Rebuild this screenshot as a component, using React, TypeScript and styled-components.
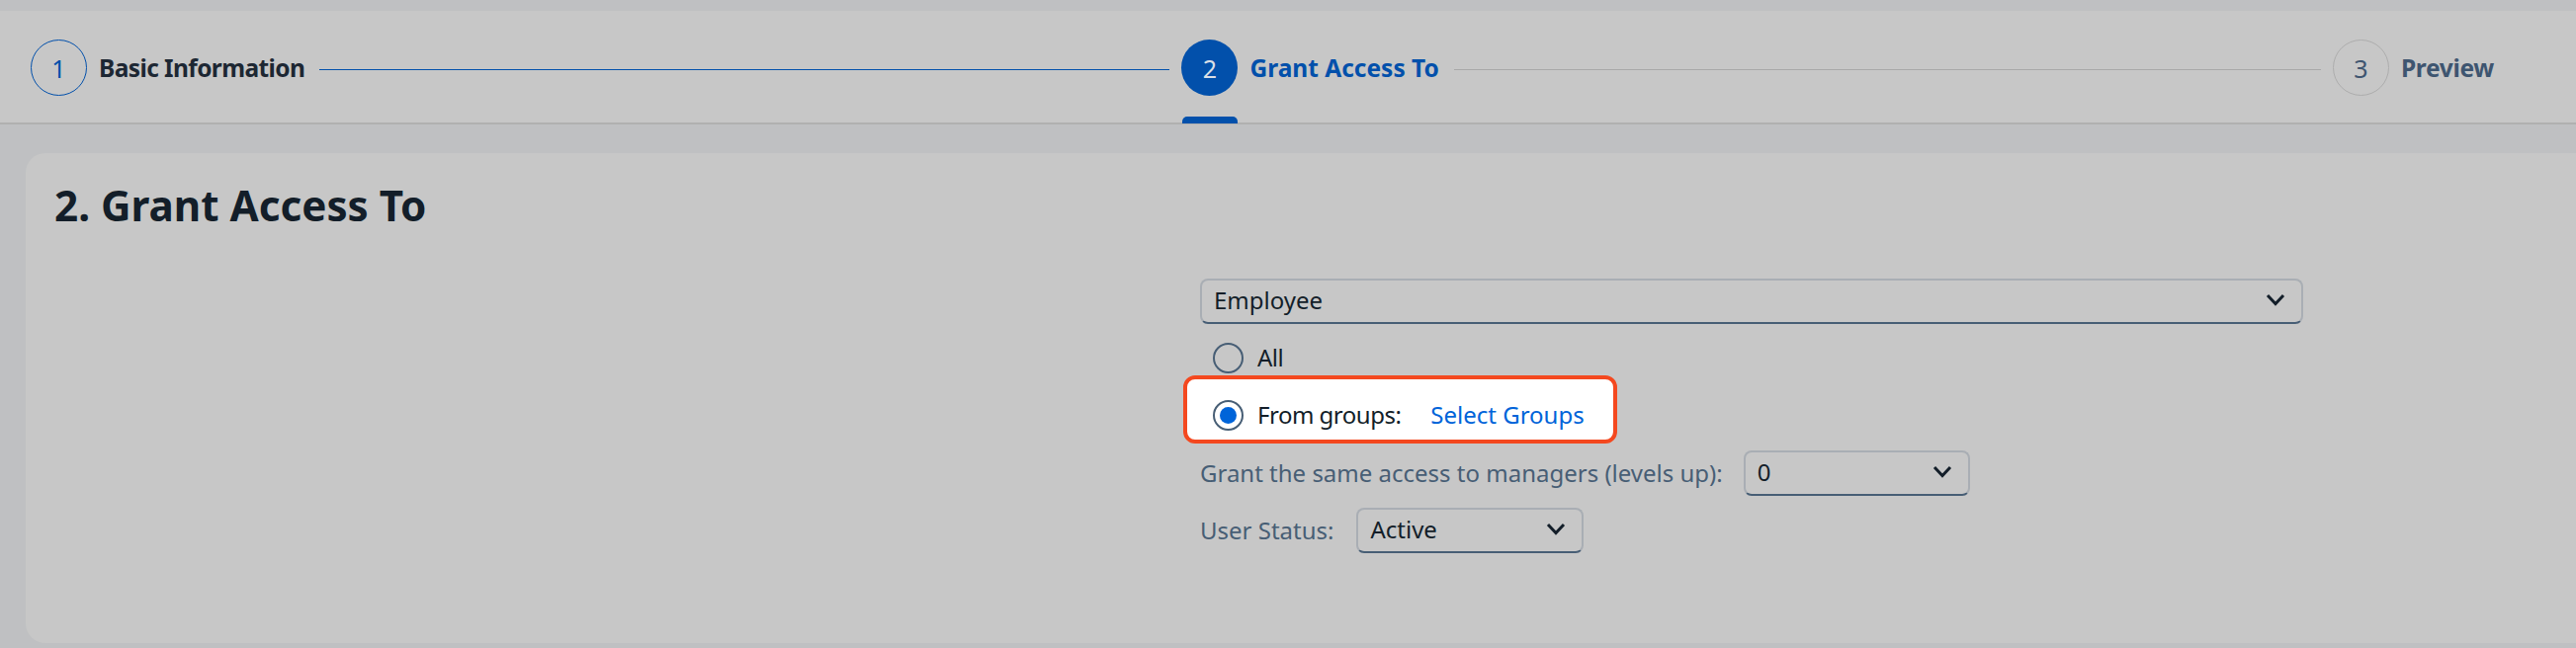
import styled, { createGlobalStyle } from 'styled-components';

const GlobalStyle = createGlobalStyle`
  html, body {
    margin: 0;
    padding: 0;
    background: #bfc0c2;
  }
  * {
    box-sizing: border-box;
  }
`;

const Page = styled.div`
  width: 2606px;
  height: 656px;
  padding-top: 11px;
  overflow: hidden;
  font-family: 'Noto Sans', 'Liberation Sans', sans-serif;
  color: #131e29;
`;

const Stepper = styled.header`
  display: flex;
  align-items: flex-start;
  height: 115px;
  padding: 29px 83px 0 31px;
  background: #c7c7c7;
  border-bottom: 2px solid #b0b0b0;
`;

const Step = styled.div<{ $last?: boolean }>`
  display: flex;
  align-items: center;
  flex: ${(p) => (p.$last ? 'none' : '1')};
`;

const Circle = styled.div<{ $state: 'done' | 'active' | 'todo' }>`
  position: relative;
  flex: none;
  display: flex;
  align-items: center;
  justify-content: center;
  width: 57px;
  height: 57px;
  border-radius: 50%;
  font-size: 25px;
  background: ${(p) => (p.$state === 'active' ? '#0250ab' : 'transparent')};
  color: ${(p) => (p.$state === 'active' ? '#d9dfe6' : p.$state === 'done' ? '#0250ab' : '#3e5570')};
  border: ${(p) =>
    p.$state === 'active' ? 'none' : p.$state === 'done' ? '1px solid #0250ab' : '1px solid #adadad'};
  ${(p) =>
    p.$state === 'active' &&
    `&::after {
      content: '';
      position: absolute;
      left: 1px;
      top: 78px;
      width: 56px;
      height: 7px;
      border-radius: 5px 5px 0 0;
      background: #0250ab;
    }`}
`;

const StepLabel = styled.span<{ $state: 'done' | 'active' | 'todo' }>`
  flex: none;
  margin-left: 12px;
  font-size: 24.5px;
  font-weight: 700;
  letter-spacing: ${(p) => (p.$state === 'done' ? '-0.6px' : p.$state === 'todo' ? '-0.3px' : '0')};
  color: ${(p) => (p.$state === 'active' ? '#0250ab' : p.$state === 'done' ? '#1d2733' : '#3e5570')};
`;

const Line = styled.div<{ $done?: boolean }>`
  flex: 1;
  height: 1px;
  margin: 3px 12px 0 15px;
  background: ${(p) => (p.$done ? '#0250ab' : '#a8a8a8')};
`;

const Content = styled.main`
  padding: 29px 0 5px 26px;
`;

const Card = styled.section`
  height: 496px;
  padding: 24px 0 0 29px;
  border-radius: 20px 0 0 20px;
  background: #c7c7c7;
`;

const Title = styled.h2`
  margin: 0;
  font-size: 42.2px;
  line-height: 58px;
  font-weight: 700;
  color: #131e29;
`;

const Form = styled.div`
  display: flex;
  flex-direction: column;
  align-items: flex-start;
  width: 1116px;
  margin: 45px 0 0 1159px;
`;

const Select = styled.div<{ $width: string }>`
  display: flex;
  align-items: center;
  justify-content: space-between;
  flex: none;
  width: ${(p) => p.$width};
  height: 46px;
  padding: 0 16px 3px 12px;
  border: 2px solid #a9aeb4;
  border-bottom-color: #475e75;
  border-radius: 8px;
  font-size: 24px;
  color: #131e29;
`;

const Chevron = () => (
  <svg width="20" height="13" viewBox="0 0 20 13" fill="none">
    <path d="M2 2 L10 10.5 L18 2" stroke="#131e29" strokeWidth="3" />
  </svg>
);

const RadioRow = styled.div`
  display: flex;
  align-items: center;
  height: 31px;
  margin: 19px 0 0 13px;
`;

const Radio = styled.span<{ $checked?: boolean }>`
  flex: none;
  display: flex;
  align-items: center;
  justify-content: center;
  width: 31px;
  height: 31px;
  margin-right: 14px;
  border: 2px solid #475e75;
  border-radius: 50%;
  &::after {
    content: '';
    display: ${(p) => (p.$checked ? 'block' : 'none')};
    width: 17px;
    height: 17px;
    border-radius: 50%;
    background: #0064d9;
  }
`;

const RadioText = styled.span`
  padding-bottom: 2px;
  font-size: 24px;
  letter-spacing: -0.5px;
  color: #131e29;
`;

const Highlight = styled.div`
  display: flex;
  align-items: center;
  width: 439px;
  height: 69px;
  margin: 2px 0 7px -17px;
  padding: 11px 0 0 26px;
  background: #fff;
  border: 4px solid #f4481f;
  border-radius: 12px;
`;

const LinkText = styled.a`
  margin-left: 30px;
  padding-bottom: 2px;
  font-size: 24px;
  color: #0064d9;
`;

const FieldRow = styled.div<{ $gap: string }>`
  display: flex;
  align-items: center;
  gap: ${(p) => p.$gap};
  & + & {
    margin-top: 12px;
  }
`;

const FieldLabel = styled.span`
  padding-bottom: 2px;
  font-size: 24px;
  color: #475e75;
`;

export default function App() {
  return (
    <Page>
      <GlobalStyle />
      <Stepper>
        <Step>
          <Circle $state="done">1</Circle>
          <StepLabel $state="done">Basic Information</StepLabel>
          <Line $done />
        </Step>
        <Step>
          <Circle $state="active">2</Circle>
          <StepLabel $state="active">Grant Access To</StepLabel>
          <Line />
        </Step>
        <Step $last>
          <Circle $state="todo">3</Circle>
          <StepLabel $state="todo">Preview</StepLabel>
        </Step>
      </Stepper>
      <Content>
        <Card>
          <Title>2. Grant Access To</Title>
          <Form>
            <Select $width="1116px">
              Employee
              <Chevron />
            </Select>
            <RadioRow>
              <Radio />
              <RadioText>All</RadioText>
            </RadioRow>
            <Highlight>
              <Radio $checked />
              <RadioText>From groups:</RadioText>
              <LinkText>Select Groups</LinkText>
            </Highlight>
            <FieldRow $gap="21px">
              <FieldLabel>Grant the same access to managers (levels up):</FieldLabel>
              <Select $width="229px">
                0
                <Chevron />
              </Select>
            </FieldRow>
            <FieldRow $gap="23px">
              <FieldLabel>User Status:</FieldLabel>
              <Select $width="230px">
                Active
                <Chevron />
              </Select>
            </FieldRow>
          </Form>
        </Card>
      </Content>
    </Page>
  );
}
